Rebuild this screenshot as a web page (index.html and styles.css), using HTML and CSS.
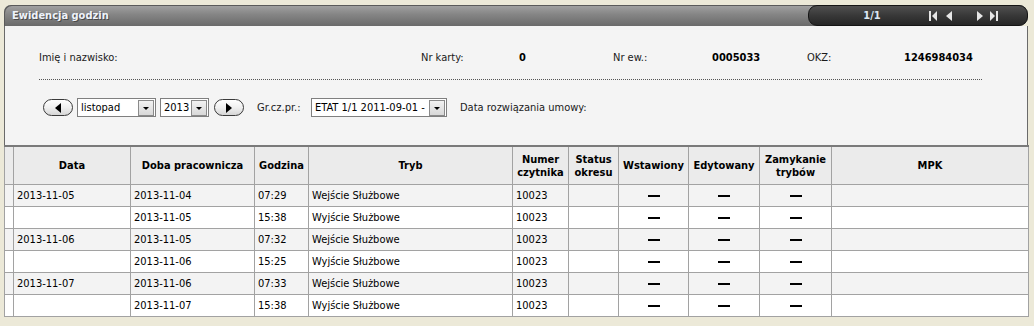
FILE: index.html
```html
<!DOCTYPE html>
<html>
<head>
    <meta charset="utf-8">
    <title>Ewidencja godzin</title>
    <link rel="stylesheet" href="styles.css">
</head>
<body>
    <div class="panel">
        <div class="titlebar">
            <span class="title">Ewidencja godzin</span>
            <div class="pager">
                <span class="pages">1/1</span>
                <div class="pager-nav">
                    <svg class="nav-first" width="8" height="10" viewBox="0 0 8 10"><rect x="0" y="0" width="2" height="10"/><polygon points="8,0 8,10 3,5"/></svg>
                    <svg class="nav-prev" width="6" height="10" viewBox="0 0 6 10"><polygon points="6,0 6,10 0,5"/></svg>
                    <svg class="nav-next" width="6" height="10" viewBox="0 0 6 10"><polygon points="0,0 0,10 6,5"/></svg>
                    <svg class="nav-last" width="8" height="10" viewBox="0 0 8 10"><polygon points="0,0 0,10 5,5"/><rect x="6" y="0" width="2" height="10"/></svg>
                </div>
            </div>
        </div>

        <div class="filters">
            <div class="info-row">
                <span class="lbl lbl-name">Imię i nazwisko:</span>
                <span class="lbl lbl-card">Nr karty:</span>
                <span class="val val-card">0</span>
                <span class="lbl lbl-ew">Nr ew.:</span>
                <span class="val val-ew">0005033</span>
                <span class="lbl lbl-okz">OKZ:</span>
                <span class="val">1246984034</span>
            </div>
            <div class="controls">
                <button class="round-btn"><svg width="6" height="10" viewBox="0 0 6 10"><polygon points="6,0 6,10 0,5"/></svg></button>
                <div class="combo combo-month"><span class="combo-text">listopad</span><span class="combo-arrow"></span></div>
                <div class="combo combo-year"><span class="combo-text">2013</span><span class="combo-arrow"></span></div>
                <button class="round-btn"><svg width="6" height="10" viewBox="0 0 6 10"><polygon points="0,0 0,10 6,5"/></svg></button>
                <span class="lbl lbl-gr">Gr.cz.pr.:</span>
                <div class="combo combo-etat"><span class="combo-text">ETAT 1/1 2011-09-01 -</span><span class="combo-arrow"></span></div>
                <span class="lbl">Data rozwiązania umowy:</span>
            </div>
        </div>

        <table class="grid">
            <colgroup>
                <col style="width:9px"><col style="width:117px"><col style="width:124px"><col style="width:54px">
                <col style="width:204px"><col style="width:56px"><col style="width:50px"><col style="width:70px">
                <col style="width:71px"><col style="width:72px"><col style="width:197px">
            </colgroup>
            <thead>
                <tr>
                    <th></th>
                    <th>Data</th>
                    <th>Doba pracownicza</th>
                    <th>Godzina</th>
                    <th>Tryb</th>
                    <th>Numer<br>czytnika</th>
                    <th>Status<br>okresu</th>
                    <th>Wstawiony</th>
                    <th>Edytowany</th>
                    <th>Zamykanie<br>trybów</th>
                    <th>MPK</th>
                </tr>
            </thead>
            <tbody>
                <tr>
                    <td></td><td>2013-11-05</td><td>2013-11-04</td><td>07:29</td><td>Wejście Służbowe</td><td>10023</td><td></td>
                    <td class="mark"><span class="dash"></span></td><td class="mark"><span class="dash"></span></td><td class="mark"><span class="dash"></span></td><td></td>
                </tr>
                <tr>
                    <td></td><td></td><td>2013-11-05</td><td>15:38</td><td>Wyjście Służbowe</td><td>10023</td><td></td>
                    <td class="mark"><span class="dash"></span></td><td class="mark"><span class="dash"></span></td><td class="mark"><span class="dash"></span></td><td></td>
                </tr>
                <tr>
                    <td></td><td>2013-11-06</td><td>2013-11-05</td><td>07:32</td><td>Wejście Służbowe</td><td>10023</td><td></td>
                    <td class="mark"><span class="dash"></span></td><td class="mark"><span class="dash"></span></td><td class="mark"><span class="dash"></span></td><td></td>
                </tr>
                <tr>
                    <td></td><td></td><td>2013-11-06</td><td>15:25</td><td>Wyjście Służbowe</td><td>10023</td><td></td>
                    <td class="mark"><span class="dash"></span></td><td class="mark"><span class="dash"></span></td><td class="mark"><span class="dash"></span></td><td></td>
                </tr>
                <tr>
                    <td></td><td>2013-11-07</td><td>2013-11-06</td><td>07:33</td><td>Wejście Służbowe</td><td>10023</td><td></td>
                    <td class="mark"><span class="dash"></span></td><td class="mark"><span class="dash"></span></td><td class="mark"><span class="dash"></span></td><td></td>
                </tr>
                <tr>
                    <td></td><td></td><td>2013-11-07</td><td>15:38</td><td>Wyjście Służbowe</td><td>10023</td><td></td>
                    <td class="mark"><span class="dash"></span></td><td class="mark"><span class="dash"></span></td><td class="mark"><span class="dash"></span></td><td></td>
                </tr>
            </tbody>
        </table>
    </div>
</body>
</html>
```

FILE: styles.css
```css
body {
    margin: 0;
    padding: 5px 6px 0 4px;
    background: #ece9d8;
    font-family: 'DejaVu Sans Condensed', 'DejaVu Sans', sans-serif;
    font-size: 11px;
    color: #111;
}
.panel {
    width: 1024px;
}

/* pasek tytulu */
.titlebar {
    display: flex;
    align-items: stretch;
    height: 21px;
    background: linear-gradient(#a3a3a3 0%, #858585 45%, #6a6a6a 100%);
    border-radius: 7px 9px 9px 0;
    box-shadow: inset 1px 1px 0 #5a5a5a;
}
.title {
    flex: 1;
    padding-left: 8px;
    line-height: 21px;
    font-weight: bold;
    color: #eef3fa;
    text-shadow: 1px 1px 0 #4a4a4a;
}
.pager {
    display: flex;
    align-items: center;
    width: 218px;
    border: 1px solid #151515;
    border-radius: 9px;
    background: linear-gradient(#505050 0%, #383838 50%, #262626 100%);
}
.pages {
    width: 122px;
    padding-left: 2px;
    text-align: center;
    font-weight: bold;
    color: #dde8f4;
}
.pager-nav {
    display: flex;
    align-items: center;
    margin-left: -4px;
}
.pager-nav svg { fill: #e6e6e6; }
.nav-prev { margin-left: 9px; }
.nav-next { margin-left: 25px; }
.nav-last { margin-left: 7px; }

/* filtry */
.filters {
    background: #f4f4f4;
    border-left: 1px solid #6a6a6a;
    border-right: 1px solid #6a6a6a;
    padding: 25px 0 28px 34px;
}
.info-row {
    display: flex;
    height: 14px;
    line-height: 14px;
}
.lbl { color: #1a1a1a; }
.val { font-weight: bold; color: #000; }
.lbl-name { width: 382px; }
.lbl-card { width: 98px; }
.val-card { width: 94px; }
.lbl-ew { width: 99px; }
.val-ew { width: 95px; }
.lbl-okz { width: 97px; }
.info-row {
    width: 943px;
    padding-bottom: 14px;
    border-bottom: 1px dotted #555;
}
.controls {
    display: flex;
    align-items: center;
    height: 19px;
    margin: 18px 0 0 4px;
}
.round-btn {
    display: flex;
    align-items: center;
    justify-content: center;
    width: 30px;
    height: 17px;
    padding: 0;
    border: 1px solid #3a3a3a;
    border-radius: 9px;
    background: linear-gradient(#ffffff 0%, #f0f0f0 50%, #d6d6d6 100%);
}
.round-btn svg { fill: #000; }
.combo {
    display: flex;
    align-items: center;
    height: 17px;
    border: 1px solid #7f7f7f;
    background: #fff;
    margin-left: 4px;
}
.combo-text {
    flex: 1;
    padding-left: 3px;
    white-space: nowrap;
    color: #000;
}
.combo-arrow {
    position: relative;
    width: 14px;
    height: 14px;
    margin-right: 1px;
    border: 1px solid #8a8a8a;
    background: linear-gradient(#f2f2f2, #d8d8d8);
}
.combo-arrow::after {
    content: "";
    position: absolute;
    left: 4px;
    top: 6px;
    border-left: 3px solid transparent;
    border-right: 3px solid transparent;
    border-top: 3px solid #000;
}
.combo-month { width: 77px; }
.combo-year { width: 47px; }
.combo-etat { width: 134px; margin-right: 13px; }
.controls .round-btn:nth-of-type(2) { margin-left: 5px; }
.lbl-gr { margin-left: 13px; width: 50px; }

/* tabela */
.grid {
    width: 1024px;
    table-layout: fixed;
    border-collapse: collapse;
    border-top: 2px solid #7a7a7a;
    border-left: 1px solid #7a7a7a;
    background: #fff;
}
.grid th,
.grid td {
    border: 1px solid #a2a2a2;
    padding: 0 3px;
    white-space: nowrap;
    overflow: hidden;
}
.grid th {
    height: 37px;
    background: #ebebeb;
    font-weight: bold;
    line-height: 13px;
    text-align: center;
    color: #000;
}
.grid td {
    height: 21px;
    color: #000;
}
.grid tbody tr:nth-child(odd) td { background: #f3f3f3; }
.grid td.mark { text-align: center; }
.dash {
    display: inline-block;
    width: 12px;
    height: 2px;
    background: #000;
    vertical-align: middle;
}
```
